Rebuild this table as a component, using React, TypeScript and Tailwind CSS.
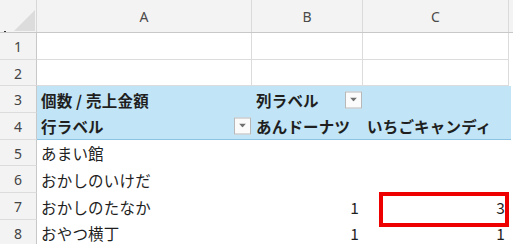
const jp = "font-['Noto_Sans_CJK_JP','Noto_Sans',sans-serif]";

type Cell = { text?: string; bold?: boolean; right?: boolean; filter?: boolean };
type Row = { n: number; kind: "grid" | "pivot" | "pivotLast" | "body"; cells: [Cell, Cell, Cell] };

const rows: Row[] = [
  { n: 1, kind: "grid", cells: [{}, {}, {}] },
  { n: 2, kind: "grid", cells: [{}, {}, {}] },
  {
    n: 3,
    kind: "pivot",
    cells: [{ text: "個数 / 売上金額", bold: true }, { text: "列ラベル", bold: true, filter: true }, {}],
  },
  {
    n: 4,
    kind: "pivotLast",
    cells: [
      { text: "行ラベル", bold: true, filter: true },
      { text: "あんドーナツ", bold: true },
      { text: "いちごキャンディ", bold: true },
    ],
  },
  { n: 5, kind: "body", cells: [{ text: "あまい館" }, {}, {}] },
  { n: 6, kind: "body", cells: [{ text: "おかしのいけだ" }, {}, {}] },
  { n: 7, kind: "body", cells: [{ text: "おかしのたなか" }, { text: "1", right: true }, { text: "3", right: true }] },
  { n: 8, kind: "body", cells: [{ text: "おやつ横丁" }, { text: "1", right: true }, { text: "1", right: true }] },
];

const widths = ["w-[215px]", "w-[111px]", "w-[146px]"];

function FilterButton() {
  return (
    <span className="absolute right-[1px] top-1/2 -translate-y-1/2 w-[17px] h-[17px] bg-[#fbfbfb] border border-[#b8b8b8] flex items-center justify-center">
      <svg width="7" height="4" viewBox="0 0 7 4">
        <path d="M0 0h7L3.5 4z" fill="#707070" />
      </svg>
    </span>
  );
}

export default function App() {
  return (
    <div className="relative w-[513px] h-[244px] overflow-hidden bg-white text-[#1f1f1f]">
      {/* column letters */}
      <div className="flex h-[33px] bg-[#f3f3f3] border-b border-[#c8c8c8]">
        <div className="relative w-[37px] shrink-0 border-r border-[#d8d8d8]">
          <svg className="absolute left-[14px] top-[10px]" width="21" height="21" viewBox="0 0 21 21">
            <path d="M21 0V21H0z" fill="#dcdcdc" />
          </svg>
          <span className="absolute left-[4px] top-[31px] w-[2px] h-[1px] bg-[#333]" />
        </div>
        {["A", "B", "C"].map((c, i) => (
          <div
            key={c}
            className={`${widths[i]} shrink-0 border-r border-[#dadada] flex items-center justify-center pt-[1px] text-[14px] text-[#4a4a4a] font-['Noto_Sans',sans-serif]`}
          >
            {c}
          </div>
        ))}
        <div className="w-[2px]" />
      </div>

      {rows.map((r) => {
        const pivot = r.kind === "pivot" || r.kind === "pivotLast";
        return (
          <div key={r.n} className="flex h-[26.7px]">
            <div className="w-[37px] shrink-0 bg-[#f3f3f3] border-r border-b border-r-[#c8c8c8] border-b-[#dcdcdc] flex items-center justify-center pt-[1px] text-[14px] text-[#444] font-['Noto_Sans',sans-serif]">
              {r.n}
            </div>
            {r.cells.map((c, i) => (
              <div
                key={i}
                className={`${widths[i]} shrink-0 relative flex items-center px-[4px] pt-[2px] ${jp} text-[15.5px] leading-none ${
                  c.right ? "justify-end pr-[4px]" : ""
                } ${c.bold ? "font-bold" : ""} ${
                  r.kind === "grid"
                    ? "border-r border-b border-[#dcdcdc]"
                    : pivot
                      ? "bg-[#c1e5f6]"
                      : ""
                } ${r.kind === "pivotLast" ? "border-b border-[#8cc3e4]" : ""}`}
              >
                <span className="whitespace-nowrap tracking-[0.2px]">{c.text}</span>
                {c.filter && <FilterButton />}
              </div>
            ))}
            <div
              className={`w-[2px] ${pivot ? "bg-[#c1e5f6]" : ""} ${r.kind === "pivotLast" ? "border-b border-[#8cc3e4]" : ""}`}
            />
          </div>
        );
      })}

      {/* highlight on C7 */}
      <div className="absolute left-[379px] top-[192px] w-[130px] h-[35px] border-[4px] border-[#ee0000]" />
    </div>
  );
}
